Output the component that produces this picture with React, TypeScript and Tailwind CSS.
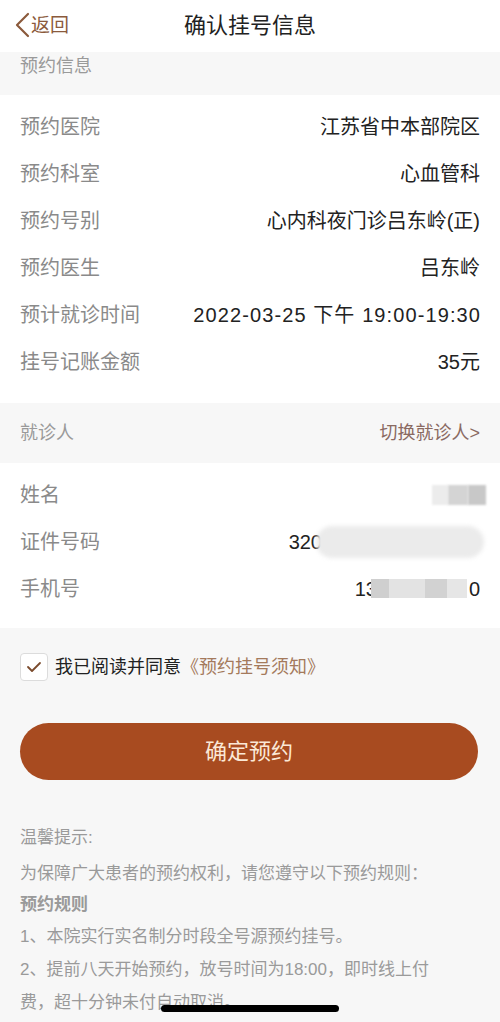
import React from 'react';

const infoRows = [
  { label: '预约医院', value: '江苏省中本部院区' },
  { label: '预约科室', value: '心血管科' },
  { label: '预约号别', value: '心内科夜门诊吕东岭(正)' },
  { label: '预约医生', value: '吕东岭' },
  { label: '预计就诊时间', value: '2022-03-25 下午 19:00-19:30', wide: true },
  { label: '挂号记账金额', value: '35元' },
];

export default function App() {
  return (
    <div className="w-[500px] h-[1022px] overflow-hidden bg-[#f7f7f7] font-['Liberation_Sans','Noto_Sans_CJK_SC',sans-serif] relative">
      {/* header */}
      <div className="h-[52px] bg-white flex items-center relative">
        <div className="flex items-center pl-[13px] pb-[2px] text-[#8b5a3c]">
          <svg width="18" height="28" viewBox="0 0 18 28" fill="none">
            <path d="M15 3 L4 14 L15 25" stroke="#8b5a3c" strokeWidth="2.2" strokeLinecap="round" strokeLinejoin="round" />
          </svg>
          <span className="text-[19px] leading-none">返回</span>
        </div>
        <div className="absolute left-0 right-0 top-0 h-[50px] flex items-center justify-center pointer-events-none">
          <span className="text-[22px] text-[#222]">确认挂号信息</span>
        </div>
      </div>

      {/* 预约信息 */}
      <div className="h-[43px] flex items-start pt-[1px] px-5">
        <span className="text-[18px] text-[#9a9a9a] leading-[26px]">预约信息</span>
      </div>
      <div className="bg-white pt-2 pb-[18px] px-5">
        {infoRows.map((r) => (
          <div key={r.label} className="h-[47px] flex items-center justify-between">
            <span className="text-[20px] text-[#8a8a8a]">{r.label}</span>
            <span className={r.wide ? 'text-[20px] text-[#222] tracking-[1.1px] mr-[-1px]' : 'text-[20px] text-[#222]'}>
              {r.value}
            </span>
          </div>
        ))}
      </div>

      {/* 就诊人 */}
      <div className="h-[60px] flex items-center justify-between px-5">
        <span className="text-[18px] text-[#9a9a9a]">就诊人</span>
        <span className="text-[18px] text-[#8a6a62]">切换就诊人&gt;</span>
      </div>
      <div className="bg-white pt-2 pb-4 px-5">
        <div className="h-[47px] flex items-center justify-between">
          <span className="text-[20px] text-[#8a8a8a]">姓名</span>
          <div className="flex mr-[-6px]">
            <div className="w-[16px] h-[20px] bg-[#ececec] blur-[1px]" />
            <div className="w-[20px] h-[20px] bg-[#d4d4d4] blur-[1px]" />
            <div className="w-[18px] h-[20px] bg-[#c8c8c8] blur-[1px]" />
          </div>
        </div>
        <div className="h-[47px] flex items-center justify-end">
          <span className="text-[20px] text-[#8a8a8a] mr-auto">证件号码</span>
          <span className="text-[20px] text-[#222]">320</span>
          <div className="w-[168px] h-[32px] rounded-full bg-[#ebebeb] blur-[2px] ml-[-6px] mr-[-4px]" />
        </div>
        <div className="h-[47px] flex items-center justify-end">
          <span className="text-[20px] text-[#8a8a8a] mr-auto">手机号</span>
          <span className="text-[20px] text-[#222]">13</span>
          <div className="flex h-[19px] ml-[-6px]">
            <div className="w-[18px] bg-[#cfcfcf]" />
            <div className="w-[36px] bg-[#e3e3e3]" />
            <div className="w-[22px] bg-[#d2d2d2]" />
            <div className="w-[20px] bg-[#e6e6e6]" />
          </div>
          <span className="text-[20px] text-[#222] ml-[2px]">0</span>
        </div>
      </div>

      {/* agree */}
      <div className="flex items-center px-5 pt-[25px]">
        <div className="w-[28px] h-[28px] rounded-[4px] border border-[#dcdcdc] bg-white flex items-center justify-center">
          <svg width="16" height="12" viewBox="0 0 16 12" fill="none">
            <path d="M2 6 L6 10 L14 2" stroke="#7a4a2c" strokeWidth="1.8" strokeLinecap="round" strokeLinejoin="round" />
          </svg>
        </div>
        <span className="text-[18px] text-[#222] ml-[7px]">我已阅读并同意</span>
        <span className="text-[18px] text-[#a47a5c]">《预约挂号须知》</span>
      </div>

      {/* button */}
      <div className="px-5 pt-[42px]">
        <button className="w-[458px] h-[57px] rounded-full bg-[#a84b20] text-[#fbe8d6] text-[22px] flex items-center justify-center">
          确定预约
        </button>
      </div>

      {/* tips */}
      <div className="px-5 pt-[41px] text-[17px] text-[#9a9a9a] leading-[33px]">
        <p>温馨提示:</p>
        <p className="mt-[3px]">为保障广大患者的预约权利，请您遵守以下预约规则：</p>
        <p className="font-bold leading-[30px]">预约规则</p>
        <p>1、本院实行实名制分时段全号源预约挂号。</p>
        <p>
          2、提前八天开始预约，放号时间为18:00，即时线上付
          <br />
          费，超十分钟未付自动取消。
        </p>
      </div>

      <div className="absolute left-[161px] top-[1005px] w-[178px] h-[7px] rounded-full bg-black" />
    </div>
  );
}
